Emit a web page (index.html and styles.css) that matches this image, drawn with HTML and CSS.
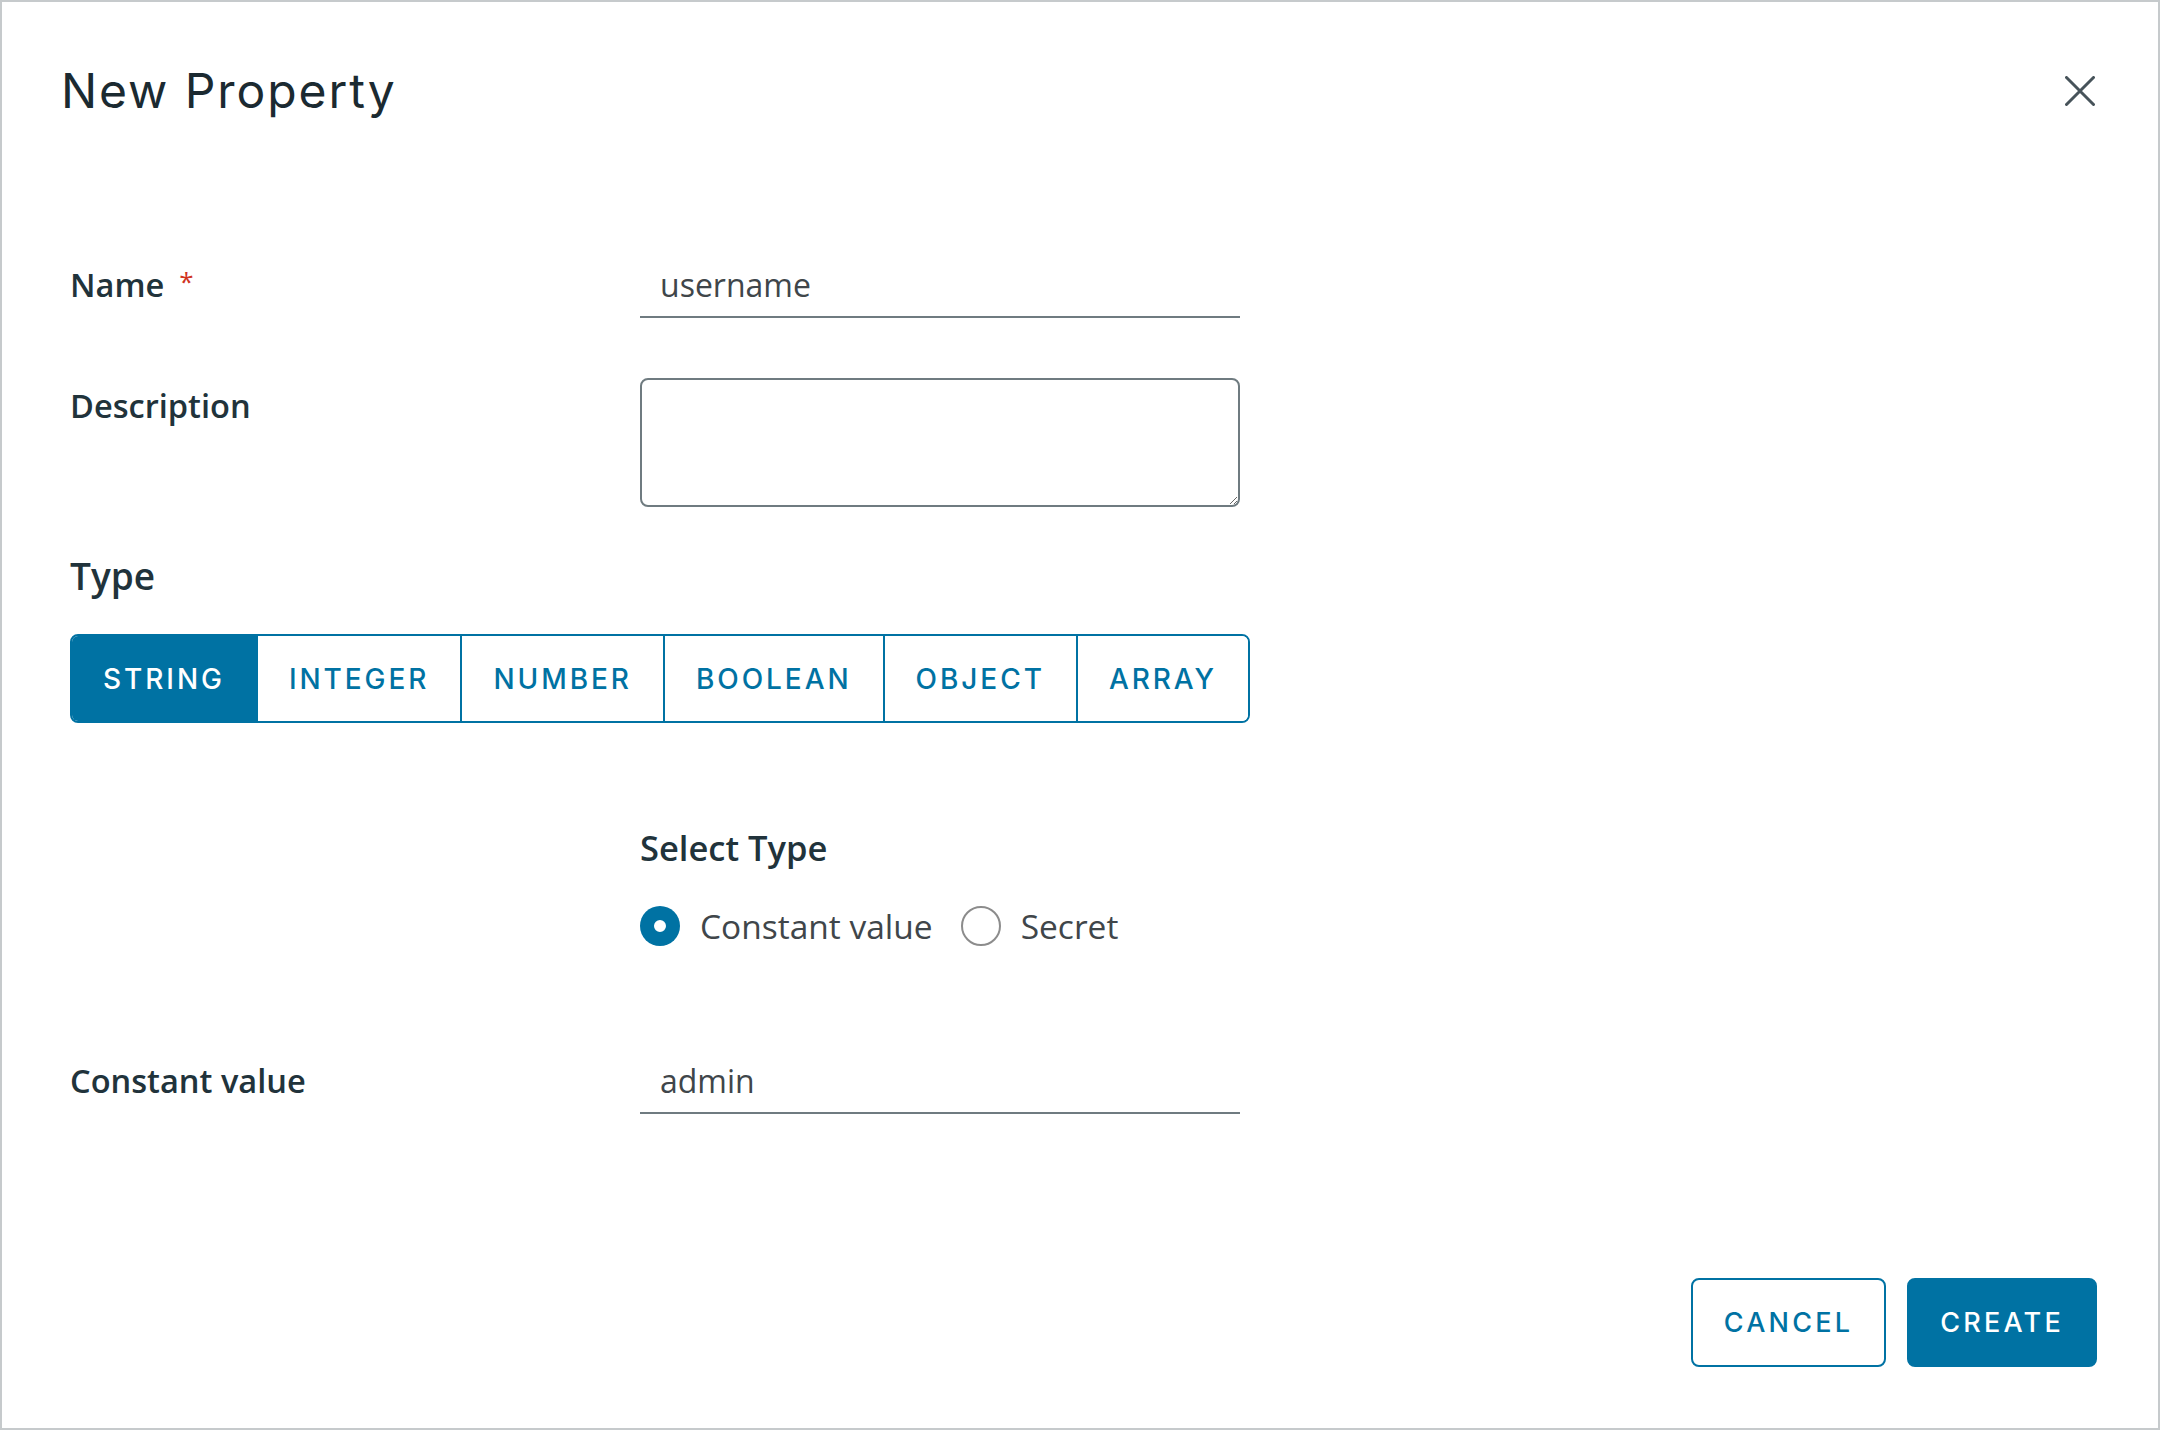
FILE: index.html
```html
<!DOCTYPE html>
<html lang="en">
<head>
<meta charset="utf-8">
<title>New Property</title>
<link rel="stylesheet" href="styles.css">
</head>
<body>
<div class="modal">
  <header class="modal-header">
    <h1 class="modal-title">New Property</h1>
    <button class="close" type="button" aria-label="Close">
      <svg width="30" height="30" viewBox="0 0 30 30"><path d="M1.5 1.5 L28.5 28.5 M28.5 1.5 L1.5 28.5" stroke="#47535a" stroke-width="3" stroke-linecap="round" fill="none"/></svg>
    </button>
  </header>
  <form class="modal-body">
    <div class="form-row">
      <label class="label">Name<span class="req">*</span></label>
      <div class="input">username</div>
    </div>
    <div class="form-row row-desc">
      <label class="label label-desc">Description</label>
      <textarea class="textarea"></textarea>
    </div>
    <div class="type-section">
      <div class="section-label">Type</div>
      <div class="btn-group">
        <button type="button" class="seg active">STRING</button>
        <button type="button" class="seg">INTEGER</button>
        <button type="button" class="seg">NUMBER</button>
        <button type="button" class="seg">BOOLEAN</button>
        <button type="button" class="seg">OBJECT</button>
        <button type="button" class="seg">ARRAY</button>
      </div>
    </div>
    <div class="select-type">
      <div class="label label-select">Select Type</div>
      <div class="radios">
        <label class="radio"><span class="dot checked"></span><span class="radio-text">Constant value</span></label>
        <label class="radio"><span class="dot"></span><span class="radio-text">Secret</span></label>
      </div>
    </div>
    <div class="form-row row-const">
      <label class="label">Constant value</label>
      <div class="input">admin</div>
    </div>
  </form>
  <footer class="modal-footer">
    <button type="button" class="btn btn-outline">CANCEL</button>
    <button type="button" class="btn btn-primary">CREATE</button>
  </footer>
</div>
</body>
</html>
```

FILE: styles.css
```css
html, body {
  margin: 0;
  padding: 0;
  background: #ffffff;
}

.modal {
  box-sizing: border-box;
  width: 2160px;
  height: 1430px;
  border: 2px solid #c6cacc;
  padding: 61px 61px 61px 59px;
  display: flex;
  flex-direction: column;
  background: #ffffff;
}

.modal-header {
  display: flex;
  justify-content: space-between;
  align-items: center;
}

.modal-title {
  margin: 0;
  font-family: Inter, "Noto Sans", sans-serif;
  font-weight: 400;
  font-size: 48px;
  line-height: 56px;
  letter-spacing: 0.04em;
  color: #1b2a31;
}

.close {
  background: none;
  border: 0;
  padding: 0;
  margin-right: 2px;
  width: 30px;
  height: 30px;
  display: flex;
}

.modal-body {
  margin: 151px 0 0 9px;
  display: flex;
  flex-direction: column;
}

.form-row {
  display: grid;
  grid-template-columns: 570px 600px;
  align-items: start;
}

.label {
  font-family: "Open Sans", "Noto Sans", sans-serif;
  font-weight: 600;
  font-size: 32.6px;
  line-height: 30px;
  color: #21333b;
}

.req {
  color: #d0331f;
  margin-left: 15px;
  font-weight: 400;
  font-size: 26px;
  line-height: 0;
  vertical-align: 6px;
}

.input {
  font-family: "Open Sans", "Noto Sans", sans-serif;
  font-weight: 400;
  font-size: 32px;
  line-height: 30px;
  color: #40464a;
  padding: 0 20px 16px;
  border-bottom: 2px solid #6f7b80;
}

.row-desc {
  margin-top: 60px;
}

.label-desc {
  margin-top: 13px;
}

.textarea {
  display: block;
  box-sizing: border-box;
  width: 600px;
  height: 129px;
  margin: 0;
  border: 2px solid #6f7b80;
  border-radius: 8px;
  background: #ffffff;
  resize: vertical;
  font-family: "Open Sans", sans-serif;
  font-size: 32px;
}

.type-section {
  margin-top: 49px;
  display: flex;
  flex-direction: column;
  align-items: flex-start;
}

.section-label {
  font-family: "Open Sans", "Noto Sans", sans-serif;
  font-weight: 600;
  font-size: 37px;
  line-height: 40px;
  color: #21333b;
}

.btn-group {
  margin-top: 38px;
  display: flex;
  border: 2px solid #0072a3;
  border-radius: 8px;
  overflow: hidden;
}

.seg {
  height: 85px;
  margin: 0;
  padding: 0 31px;
  border: 0;
  border-left: 2px solid #0072a3;
  background: #ffffff;
  color: #0072a3;
  font-family: Inter, "Noto Sans", sans-serif;
  font-weight: 500;
  font-size: 28px;
  letter-spacing: 0.105em;
}

.seg:first-child {
  border-left: 0;
}

.seg.active {
  background: #0072a3;
  color: #ffffff;
}

.select-type {
  margin: 110px 0 0 570px;
}

.label-select {
  font-size: 34.5px;
}

.radios {
  margin-top: 43px;
  display: flex;
  align-items: center;
  gap: 28px;
}

.radio {
  display: flex;
  align-items: center;
  gap: 20px;
}

.dot {
  box-sizing: border-box;
  width: 40px;
  height: 40px;
  border-radius: 50%;
  border: 2px solid #8c8c8c;
  background: #ffffff;
}

.dot.checked {
  border: 0;
  background: #ffffff;
  box-shadow: inset 0 0 0 14px #0072a3;
}

.radio-text {
  font-family: "Open Sans", "Noto Sans", sans-serif;
  font-weight: 400;
  font-size: 33.5px;
  line-height: 40px;
  color: #40464a;
}

.row-const {
  margin-top: 120px;
}

.modal-footer {
  margin-top: auto;
  display: flex;
  justify-content: flex-end;
  gap: 21px;
}

.btn {
  box-sizing: border-box;
  height: 89px;
  margin: 0;
  padding: 0 31px;
  border: 2px solid #0072a3;
  border-radius: 8px;
  font-family: Inter, "Noto Sans", sans-serif;
  font-weight: 500;
  font-size: 27px;
  letter-spacing: 0.12em;
}

.btn-outline {
  background: #ffffff;
  color: #0072a3;
}

.btn-primary {
  background: #0072a3;
  color: #ffffff;
}
```
